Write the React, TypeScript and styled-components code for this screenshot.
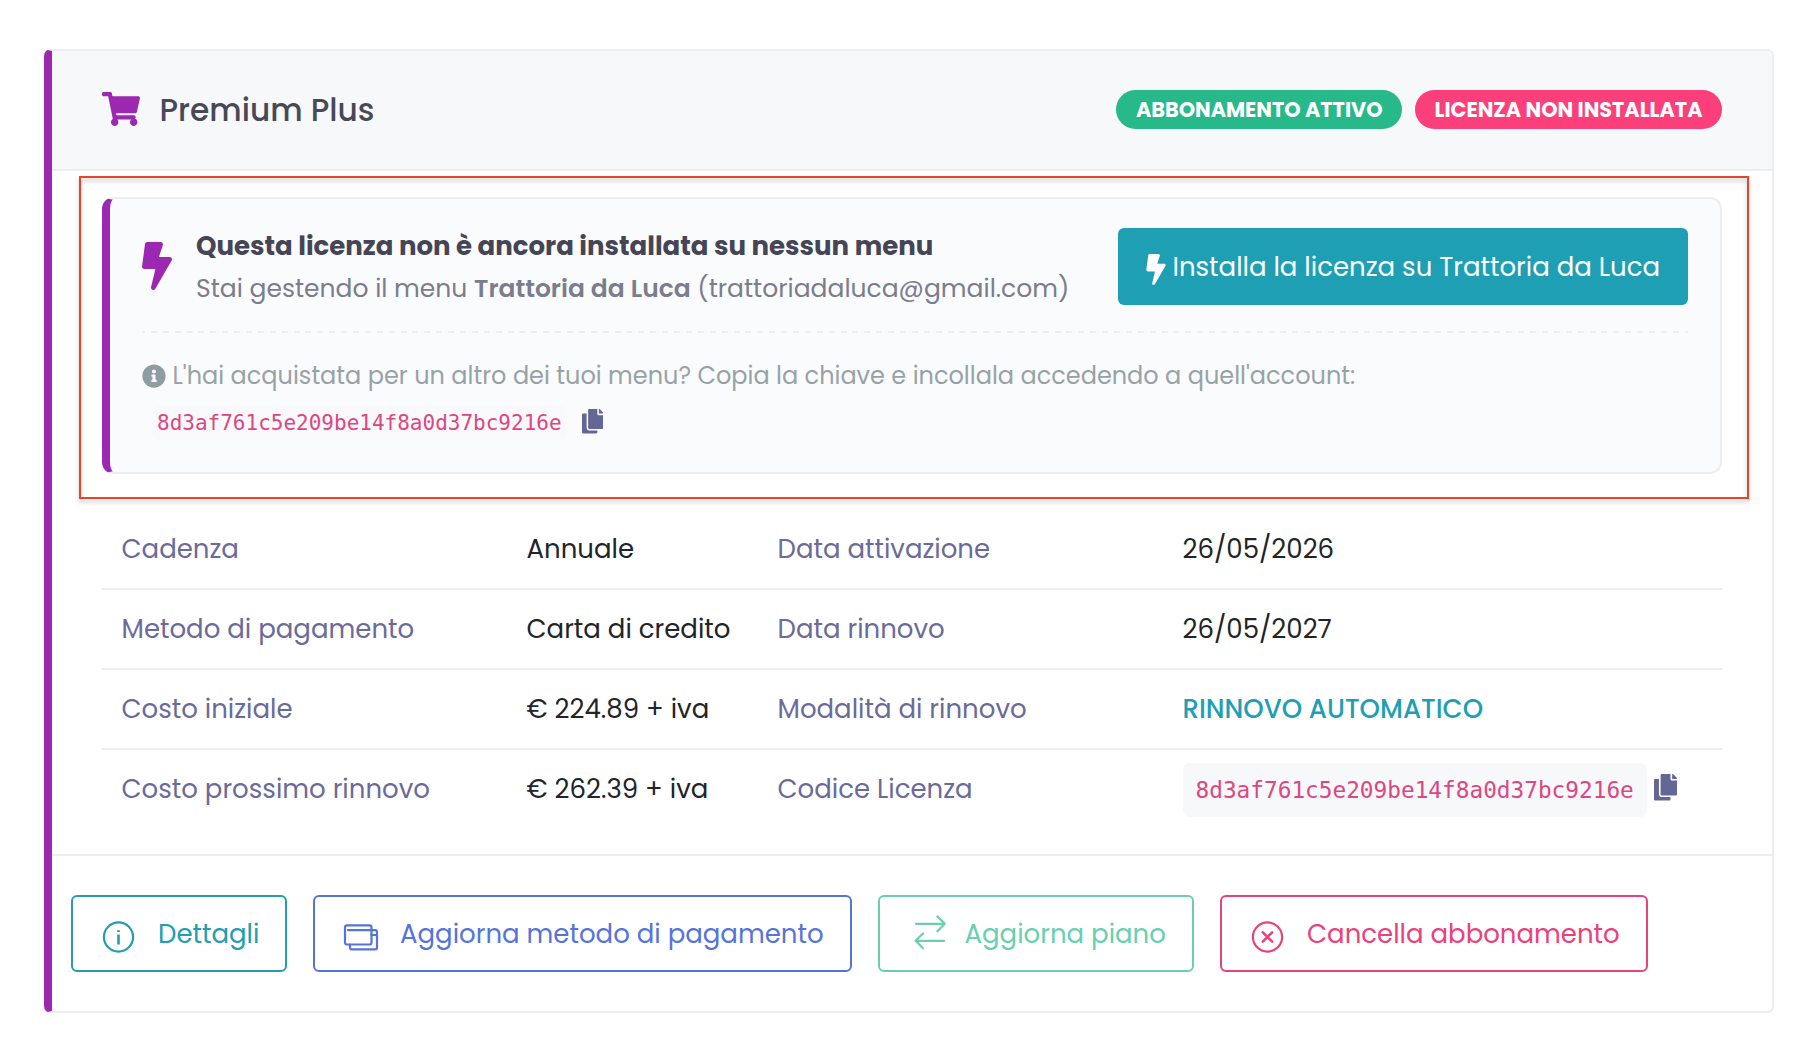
import React from "react";
import styled, { createGlobalStyle } from "styled-components";
import { FaBolt, FaCopy, FaInfoCircle, FaShoppingCart } from "react-icons/fa";

const purple = "#9c27b0";
const teal = "#1e9fb4";
const line = "#ebedef";

const GlobalStyle = createGlobalStyle`
  *, *::before, *::after { box-sizing: border-box; }
  body {
    margin: 0;
    background: #fff;
    color: #212529;
    font-family: Poppins, Inter, sans-serif;
    font-size: 26px;
    line-height: 1.5;
  }
`;

const Page = styled.main`
  padding: 49px 46px 43px 44px;
`;

const Card = styled.section`
  position: relative;
  border: 2px solid ${line};
  border-left: 8px solid ${purple};
  border-radius: 7px;
  background: #fff;
`;

const CardHeader = styled.header`
  display: flex;
  align-items: center;
  justify-content: space-between;
  height: 120px;
  padding: 0 50px;
  border-bottom: 2px solid ${line};
  background: #f6f8fa;
  border-top-right-radius: 5px;
`;

const Title = styled.h1`
  display: flex;
  align-items: center;
  gap: 19.5px;
  margin: 0;
  font-size: 31.2px;
  font-weight: 500;
  color: #484858;

  svg {
    width: 38px;
    height: 34px;
    margin-top: -2px;
    color: ${purple};
  }
`;

const Badges = styled.div`
  display: flex;
  gap: 13px;
  margin-top: -1px;
`;

const Badge = styled.span<{ $bg: string }>`
  display: flex;
  align-items: center;
  height: 39px;
  padding: 0 19.5px;
  border-radius: 20px;
  background: ${(p) => p.$bg};
  color: #fff;
  font-size: 20.8px;
  font-weight: 700;
  white-space: nowrap;
`;

const CardBody = styled.div`
  padding: 26px 50px 24px;
`;

const Notice = styled.div`
  padding: 26px 32px 32px;
  border: 2px solid ${line};
  border-left: 8px solid ${purple};
  border-radius: 12px;
  background: #fafbfd;
`;

const NoticeTop = styled.div`
  display: flex;
  align-items: center;
  padding-bottom: 25px;
  background: repeating-linear-gradient(
      90deg,
      ${line} 0 3px,
      transparent 3px 8.9px,
      ${line} 8.9px 11.89px
    )
    left bottom / 100% 2px no-repeat;

  > svg {
    width: 30px;
    height: 48px;
    margin-top: -2px;
    color: ${purple};
  }
`;

const NoticeText = styled.div`
  flex: 1;
  padding-left: 24px;
  white-space: nowrap;
`;

const NoticeTitle = styled.div`
  height: 42px;
  line-height: 42px;
  font-weight: 700;
  color: #454555;
`;

const NoticeSub = styled.div`
  height: 41px;
  line-height: 43px;
  font-size: 25px;
  color: #7b7d8c;

  strong {
    font-weight: 600;
  }
`;

const InstallButton = styled.button`
  display: flex;
  flex: none;
  align-items: center;
  gap: 6.5px;
  width: 570px;
  height: 77px;
  padding: 2px 0 0 28px;
  border: 0;
  border-radius: 6px;
  background: ${teal};
  color: #fff;
  font: inherit;
  white-space: nowrap;

  svg {
    width: 20px;
    height: 31px;
    margin-top: 4px;
  }
`;

const Hint = styled.div`
  display: flex;
  align-items: center;
  gap: 6.5px;
  height: 37px;
  margin-top: 24px;
  font-size: 24px;
  color: #98a2a6;
  white-space: nowrap;

  svg {
    width: 24px;
    height: 24px;
    color: #8f9ca2;
  }
`;

const KeyRow = styled.div`
  display: flex;
  align-items: center;
  height: 34px;
  margin: 12px 0 0 10px;
`;

const CopyIcon = styled(FaCopy)<{ $size: number; $gap: number }>`
  width: ${(p) => p.$size * 0.875}px;
  height: ${(p) => p.$size}px;
  margin: 0 0 3px ${(p) => p.$gap}px;
  color: #646695;
`;

const Code = styled.code<{ $large?: boolean }>`
  display: block;
  padding: 0 ${(p) => (p.$large ? 13 : 5)}px;
  height: ${(p) => (p.$large ? 54 : 34)}px;
  line-height: ${(p) => (p.$large ? 54 : 35)}px;
  margin: ${(p) => (p.$large ? "2px 0 0" : "0")};
  border-radius: 7px;
  background: ${(p) => (p.$large ? "#f6f8fa" : "#f9f9fc")};
  font-family: "DejaVu Sans Mono", monospace;
  font-size: ${(p) => (p.$large ? 22.75 : 21)}px;
  color: #dd4781;
`;

const Details = styled.div`
  margin-top: 36px;
`;

const Row = styled.div`
  display: grid;
  grid-template-columns: 405px 251px 405px 1fr;
  height: 80px;
  border-bottom: 2px solid ${line};

  &:last-child {
    border-bottom-color: transparent;
  }
`;

const Cell = styled.div<{ $color?: string; $weight?: number }>`
  display: flex;
  align-items: center;
  padding-left: 19.5px;
  color: ${(p) => p.$color ?? "#212529"};
  font-weight: ${(p) => p.$weight ?? 400};
  white-space: nowrap;
`;

const CardFooter = styled.footer`
  display: flex;
  gap: 26px;
  padding: 39px 19px;
  border-top: 2px solid ${line};
`;

const ActionButton = styled.button<{
  $color: string;
  $width: number;
  $inset: number;
  $gap: number;
}>`
  display: flex;
  align-items: center;
  gap: ${(p) => p.$gap}px;
  width: ${(p) => p.$width}px;
  height: 77px;
  padding: 2px 0 0 ${(p) => p.$inset}px;
  border: 2px solid ${(p) => p.$color};
  border-radius: 6px;
  background: #fff;
  color: ${(p) => p.$color};
  font: inherit;
  white-space: nowrap;
`;

const OutlineIcon = styled.svg`
  flex: none;
  width: 36px;
  height: 36px;
  margin-top: 4px;
  overflow: visible;
  fill: none;
  stroke: currentColor;
  stroke-width: 2.2;
  stroke-linecap: round;
  stroke-linejoin: round;
`;

const Highlight = styled.div`
  position: absolute;
  top: 125px;
  left: 27px;
  right: 23px;
  height: 323px;
  border: 2px solid #e4452b;
  filter: drop-shadow(0 3px 2px rgba(0, 0, 0, 0.25));
  pointer-events: none;
`;

const InfoIcon = () => (
  <OutlineIcon viewBox="0 0 36 36">
    <circle cx="17.5" cy="18" r="14.6" />
    <path d="M17.5 11.2v1.8M17.5 15.6v10" strokeLinecap="butt" strokeWidth="2.6" />
  </OutlineIcon>
);

const CardsIcon = () => (
  <OutlineIcon viewBox="0 0 36 36">
    <rect x="2" y="6.3" width="26.5" height="19.2" rx="2" />
    <path d="M5 11.1h23.5M28.5 11.1H32a2 2 0 0 1 2 2v15.3a2 2 0 0 1-2 2H9a2 2 0 0 1-2-2v-2.9M28.5 16H34" />
  </OutlineIcon>
);

const SwapIcon = () => (
  <OutlineIcon viewBox="0 0 36 36">
    <path d="M3 4.8h28.7M24.4-2.5l7.4 7.3-7.4 7.5M31.2 21.8H2.7M10 14.5l-7.4 7.3 7.4 7.4" />
  </OutlineIcon>
);

const CancelIcon = () => (
  <OutlineIcon viewBox="0 0 36 36">
    <circle cx="17.5" cy="18" r="14.6" />
    <path d="M12.8 13.3l9.4 9.4M22.2 13.3l-9.4 9.4" strokeWidth="2.6" />
  </OutlineIcon>
);

const licenseKey = "8d3af761c5e209be14f8a0d37bc9216e";
const labelColor = "#6a6b98";

const rows: { label: string; value: string; label2: string; value2?: string; accent?: boolean }[] = [
  { label: "Cadenza", value: "Annuale", label2: "Data attivazione", value2: "26/05/2026" },
  { label: "Metodo di pagamento", value: "Carta di credito", label2: "Data rinnovo", value2: "26/05/2027" },
  {
    label: "Costo iniziale",
    value: "€ 224.89 + iva",
    label2: "Modalità di rinnovo",
    value2: "RINNOVO AUTOMATICO",
    accent: true,
  },
  { label: "Costo prossimo rinnovo", value: "€ 262.39 + iva", label2: "Codice Licenza" },
];

export default function App() {
  return (
    <Page>
      <GlobalStyle />
      <Card>
        <CardHeader>
          <Title>
            <FaShoppingCart />
            Premium Plus
          </Title>
          <Badges>
            <Badge $bg="#28b98b">ABBONAMENTO ATTIVO</Badge>
            <Badge $bg="#fb3f7a">LICENZA NON INSTALLATA</Badge>
          </Badges>
        </CardHeader>

        <CardBody>
          <Notice>
            <NoticeTop>
              <FaBolt />
              <NoticeText>
                <NoticeTitle>Questa licenza non è ancora installata su nessun menu</NoticeTitle>
                <NoticeSub>
                  Stai gestendo il menu <strong>Trattoria da Luca</strong> (trattoriadaluca@gmail.com)
                </NoticeSub>
              </NoticeText>
              <InstallButton>
                <FaBolt />
                Installa la licenza su Trattoria da Luca
              </InstallButton>
            </NoticeTop>
            <Hint>
              <FaInfoCircle />
              L'hai acquistata per un altro dei tuoi menu? Copia la chiave e incollala accedendo a quell'account:
            </Hint>
            <KeyRow>
              <Code>{licenseKey}</Code>
              <CopyIcon $size={24.5} $gap={15} />
            </KeyRow>
          </Notice>

          <Details>
            {rows.map((row) => (
              <Row key={row.label}>
                <Cell $color={labelColor}>{row.label}</Cell>
                <Cell>{row.value}</Cell>
                <Cell $color={labelColor}>{row.label2}</Cell>
                {row.value2 ? (
                  <Cell $color={row.accent ? teal : undefined} $weight={row.accent ? 500 : 400}>
                    {row.value2}
                  </Cell>
                ) : (
                  <Cell>
                    <Code $large>{licenseKey}</Code>
                    <CopyIcon $size={26.4} $gap={7.5} />
                  </Cell>
                )}
              </Row>
            ))}
          </Details>
        </CardBody>

        <CardFooter>
          <ActionButton $color="#239daf" $width={216} $inset={28} $gap={21}>
            <InfoIcon />
            Dettagli
          </ActionButton>
          <ActionButton $color="#5674d8" $width={539} $inset={28} $gap={21}>
            <CardsIcon />
            Aggiorna metodo di pagamento
          </ActionButton>
          <ActionButton $color="#69cfae" $width={316} $inset={33} $gap={15.5}>
            <SwapIcon />
            Aggiorna piano
          </ActionButton>
          <ActionButton $color="#e8427c" $width={428} $inset={28} $gap={21}>
            <CancelIcon />
            Cancella abbonamento
          </ActionButton>
        </CardFooter>

        <Highlight />
      </Card>
    </Page>
  );
}
